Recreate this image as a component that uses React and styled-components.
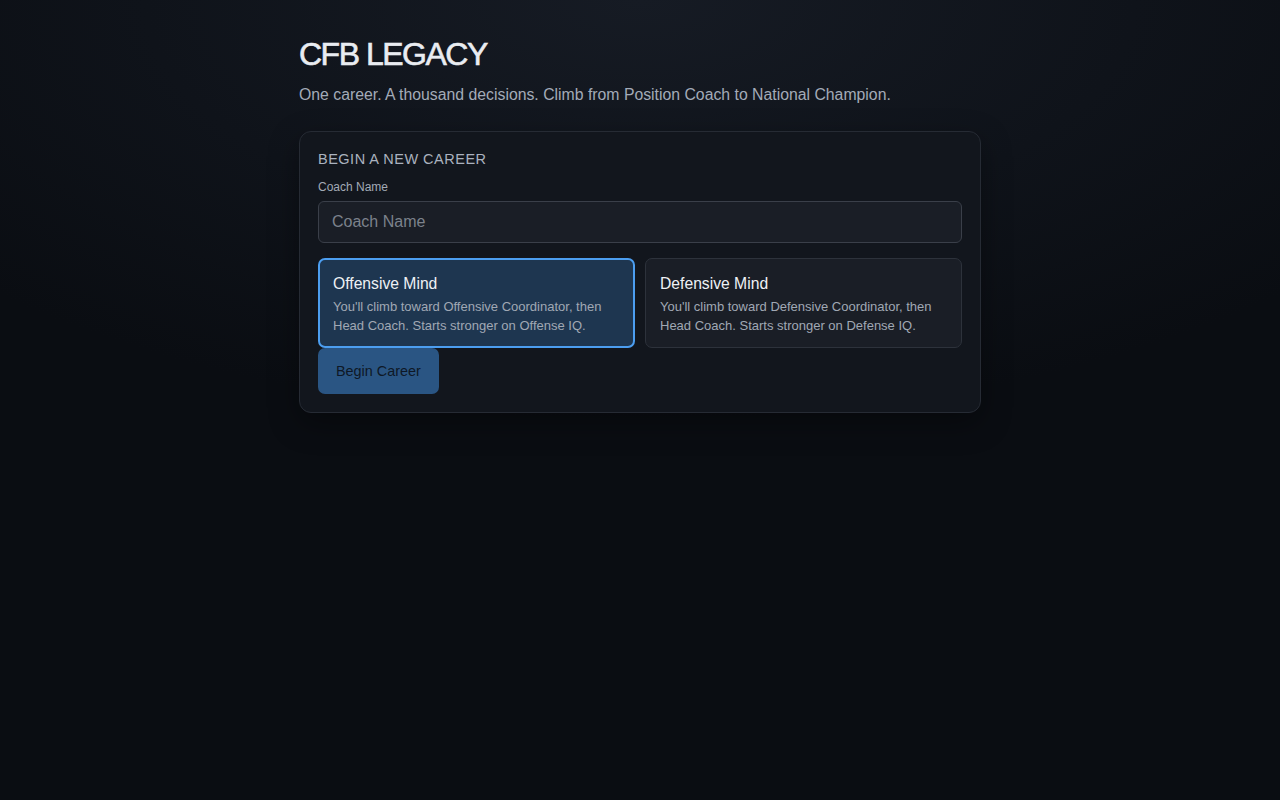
import React, { useState } from "react";
import styled, { createGlobalStyle } from "styled-components";

const Global = createGlobalStyle`
  html, body { margin: 0; padding: 0; }
  body {
    min-height: 800px;
    background: radial-gradient(ellipse 900px 420px at 50% 0%, #161b24 0%, #0f131a 55%, #0a0d12 100%) #0a0d12;
    background-color: #0a0d12;
    color: #e6e9ee;
    font-family: "Liberation Sans", Arial, sans-serif;
  }
  * { box-sizing: border-box; }
`;

const Page = styled.main`
  max-width: 682px;
  margin: 0 auto;
  padding: 34px 0 40px;
  min-height: 800px;
`;

const Title = styled.h1`
  margin: 0;
  font-size: 32px;
  line-height: 40px;
  font-weight: 400;
  letter-spacing: -1.5px;
  -webkit-text-stroke: 0.6px #e9ecf1;
  color: #e9ecf1;
`;

const Subtitle = styled.p`
  margin: 10px 0 0;
  font-size: 15.8px;
  line-height: 22px;
  color: #a3abb8;
`;

const Card = styled.section`
  margin-top: 25px;
  background: #12161d;
  border: 1px solid #262b34;
  border-radius: 12px;
  padding: 17px 18px 18px;
  box-shadow: 0 10px 30px rgba(0, 0, 0, 0.35);
`;

const CardTitle = styled.h2`
  margin: 0;
  font-size: 14.5px;
  line-height: 20px;
  font-weight: 400;
  letter-spacing: 0.5px;
  text-transform: uppercase;
  color: #aab2bf;
`;

const Label = styled.label`
  display: block;
  margin-top: 10px;
  font-size: 12px;
  line-height: 16px;
  color: #a2aab6;
`;

const Input = styled.input`
  display: block;
  width: 100%;
  height: 42px;
  margin-top: 6px;
  padding: 0 13px;
  background: #1a1e26;
  border: 1px solid #3a3f49;
  border-radius: 6px;
  color: #e6e9ee;
  font-family: "Liberation Sans", Arial, sans-serif;
  font-size: 16px;
  outline: none;
  &::placeholder { color: #7c828c; }
`;

const Options = styled.div`
  display: grid;
  grid-template-columns: 1fr 1fr;
  gap: 10px;
  margin-top: 15px;
`;

const Option = styled.button`
  text-align: left;
  cursor: pointer;
  height: 90px;
  border-radius: 7px;
  font-family: inherit;
  background: ${p => (p.$active ? "#1e3650" : "#1a1e26")};
  border: ${p => (p.$active ? "2px solid #4c9ef0" : "1px solid #2d323b")};
  padding: ${p => (p.$active ? "14px 13px 12px" : "15px 14px 13px")};
`;

const OptionTitle = styled.div`
  font-size: 15.7px;
  line-height: 20px;
  color: #eef1f5;
`;

const OptionDesc = styled.div`
  margin-top: 3px;
  font-size: 13px;
  line-height: 19px;
  color: #a0a8b4;
`;

const Button = styled.button`
  display: block;
  height: 46px;
  padding: 0 18px;
  border: none;
  border-radius: 7px;
  background: #2a5583;
  color: #0e1826;
  font-family: inherit;
  font-size: 14.4px;
  cursor: pointer;
`;

export default function App() {
  const [mind, setMind] = useState("off");
  return (
    <>
      <Global />
      <Page>
        <Title>CFB LEGACY</Title>
        <Subtitle>One career. A thousand decisions. Climb from Position Coach to National Champion.</Subtitle>
        <Card>
          <CardTitle>Begin a New Career</CardTitle>
          <Label htmlFor="coach">Coach Name</Label>
          <Input id="coach" placeholder="Coach Name" />
          <Options>
            <Option $active={mind === "off"} onClick={() => setMind("off")}>
              <OptionTitle>Offensive Mind</OptionTitle>
              <OptionDesc>You'll climb toward Offensive Coordinator, then Head Coach. Starts stronger on Offense IQ.</OptionDesc>
            </Option>
            <Option $active={mind === "def"} onClick={() => setMind("def")}>
              <OptionTitle>Defensive Mind</OptionTitle>
              <OptionDesc>You'll climb toward Defensive Coordinator, then Head Coach. Starts stronger on Defense IQ.</OptionDesc>
            </Option>
          </Options>
          <Button>Begin Career</Button>
        </Card>
      </Page>
    </>
  );
}
